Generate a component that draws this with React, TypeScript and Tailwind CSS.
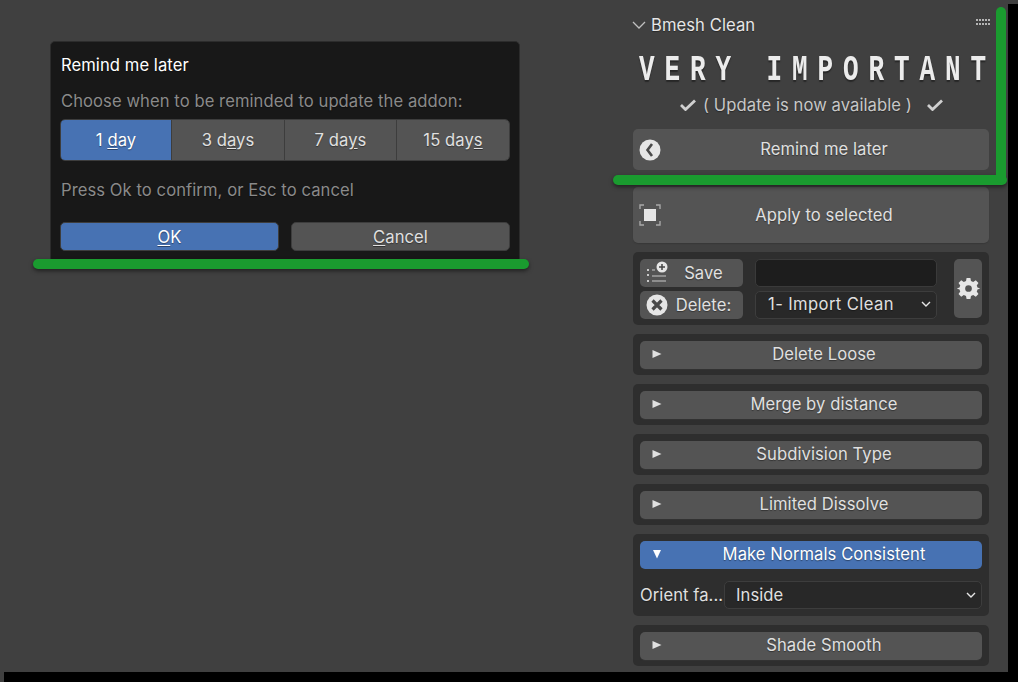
import React from "react";

const Tri = ({ down }: { down?: boolean }) => (
  <svg width="10" height="10" viewBox="0 0 10 10" className="absolute left-[12px] top-[8px]">
    {down ? <path d="M1 1H9L5 9.5Z" fill="#fff" /> : <path d="M0.5 1L9.5 5L0.5 9Z" fill="#e0e0e0" />}
  </svg>
);

const Check = () => (
  <svg width="16" height="12" viewBox="0 0 16 12">
    <path d="M1 6L5.5 10.5L15 1.5" fill="none" stroke="#d0d0d0" strokeWidth="2.8" />
  </svg>
);

const SelectChevron = () => (
  <svg width="10" height="7" viewBox="0 0 10 7">
    <path d="M1 1L5 5L9 1" fill="none" stroke="#e6e6e6" strokeWidth="1.4" />
  </svg>
);

const Collapsed = ({ label }: { label: string }) => (
  <div className="h-[41px] rounded-[5px] bg-[#2e2e2e] px-[7px] pt-[7px]">
    <div className="relative flex h-[28px] items-center justify-center rounded-[5px] bg-[#545454] pb-[2px] pl-[26px] text-[#e0e0e0] shadow-[0_1px_1px_#333]">
      <Tri />
      {label}
    </div>
  </div>
);

const Seg = ({ w, active, before, u, after, div }: { w: string; active?: boolean; before: string; u: string; after: string; div?: boolean }) => (
  <div className={`flex items-center justify-center ${w} ${active ? "bg-[#4772b3] text-white" : "bg-[#545454] text-[#e0e0e0]"} ${div ? "border-l border-[#3d3d3d]" : ""}`}>
    <span>
      {before}
      <span className="underline underline-offset-2">{u}</span>
      {after}
    </span>
  </div>
);

export default function App() {
  return (
    <div className="relative flex h-[682px] w-[1018px] overflow-hidden bg-black font-['Inter','Noto_Sans',sans-serif] text-[16.6px] tracking-[0.07px] [text-shadow:0_1px_1px_rgba(0,0,0,0.4)]">
      <div className="flex h-[672px] w-[1008px] bg-[#404040]">
        {/* left area */}
        <div className="w-[620px] pl-[50px] pt-[41px]">
          <div className="h-[222px] w-[470px] rounded-[5px] border border-[#2c2c2c] bg-[#181818] px-[10px] pt-[12px]">
            <div className="h-[22px] leading-[22px] text-white">Remind me later</div>
            <div className="mt-[14px] h-[22px] leading-[22px] text-[#8a8a8a]">Choose when to be reminded to update the addon:</div>
            <div className="-mx-px mt-[7px] flex h-[42px] overflow-hidden rounded-[5px] border border-[#3d3d3d]">
              <Seg w="w-[110px]" active before="1 " u="d" after="ay" />
              <Seg w="w-[113px]" div before="3 d" u="a" after="ys" />
              <Seg w="w-[112px]" div before="7 da" u="y" after="s" />
              <Seg w="flex-1" div before="15 day" u="s" after="" />
            </div>
            <div className="mt-[18px] h-[22px] leading-[22px] text-[#8a8a8a]">Press Ok to confirm, or Esc to cancel</div>
            <div className="-mx-px mt-[21px] flex gap-[12px]">
              <div className="flex h-[29px] w-[219px] items-center justify-center rounded-[5px] border border-[#3d3d3d] bg-[#4772b3] pt-[1px] text-white">
                <span><span className="underline underline-offset-2">O</span>K</span>
              </div>
              <div className="flex h-[29px] w-[219px] items-center justify-center rounded-[5px] border border-[#3d3d3d] bg-[#545454] pt-[1px] text-[#e0e0e0]">
                <span><span className="underline underline-offset-2">C</span>ancel</span>
              </div>
            </div>
          </div>
        </div>

        {/* right panel */}
        <div className="w-[388px] pr-[19px] pl-[13px]">
          <div className="flex h-[40px] items-center pt-[10px] text-[#e6e6e6]">
            <svg width="14" height="9" viewBox="0 0 14 9" className="-ml-px mr-[5px]">
              <path d="M1 1L7 7L13 1" fill="none" stroke="#c0c0c0" strokeWidth="1.3" />
            </svg>
            <span className="flex-1">Bmesh Clean</span>
            <svg width="15" height="7" viewBox="0 0 15 7" className="-mr-[2px] mb-[6px]">
              {[0, 3, 6, 9, 12].map((x) => (
                <g key={x} fill="#b5b5b5">
                  <rect x={x} y="0" width="2" height="2" />
                  <rect x={x} y="4" width="2" height="2" />
                </g>
              ))}
            </svg>
          </div>
          <div className="-mr-[20px] mt-[14px] h-[32px] scale-y-[1.45] whitespace-nowrap pl-[6px] font-['Liberation_Mono',monospace] text-[26px] font-bold leading-[32px] tracking-[9.9px] text-[#ececec]">
            VERY IMPORTANT
          </div>
          <div className="mt-[8px] flex h-[22px] items-center pl-[47px] text-[#c8c8c8]">
            <Check />
            <span className="ml-[7px] whitespace-nowrap">( Update is now available )</span>
            <span className="ml-[15px] flex"><Check /></span>
          </div>
          <div className="relative mt-[13px] flex h-[41px] items-center justify-center rounded-[5px] bg-[#545454] pl-[26px] text-[#e0e0e0]">
            <svg width="22" height="22" viewBox="0 0 22 22" className="absolute left-[6px] top-[10px]">
              <circle cx="11" cy="11" r="10.5" fill="#e6e6e6" />
              <path d="M13 5L8.5 11L13 17" fill="none" stroke="#4a4a4a" strokeWidth="2.6" />
            </svg>
            Remind me later
          </div>
          <div className="relative mt-[17px] flex h-[56px] items-center justify-center rounded-[5px] bg-[#545454] pl-[26px] text-[#e0e0e0] shadow-[0_1px_1px_#383838]">
            <svg width="22" height="22" viewBox="0 0 22 22" className="absolute left-[6px] top-[17px]">
              <rect x="5" y="5" width="12" height="12" fill="#e6e6e6" />
              <path d="M1 5V1H5M17 1H21V5M21 17V21H17M5 21H1V17" fill="none" stroke="#a8a8a8" strokeWidth="1.4" />
            </svg>
            Apply to selected
          </div>

          <div className="mt-[9px] flex h-[73px] rounded-[5px] bg-[#2e2e2e] px-[7px] pt-[7px]">
            <div className="flex w-[103px] shrink-0 flex-col gap-[4px]">
              <div className="relative flex h-[28px] items-center justify-center rounded-[5px] bg-[#545454] pl-[24px] text-[#e0e0e0]">
                <svg width="22" height="22" viewBox="0 0 22 22" className="absolute left-[6px] top-[2px]">
                  <circle cx="16" cy="6" r="5.5" fill="#e6e6e6" />
                  <path d="M16 3V9M13 6H19" stroke="#444" strokeWidth="1.5" />
                  <path d="M1 9H3M1 14H3M1 20H3" stroke="#c8c8c8" strokeWidth="2" />
                  <path d="M6 9H9M6 15H20M6 20H20" stroke="#c8c8c8" strokeWidth="1.2" />
                </svg>
                Save
              </div>
              <div className="relative flex h-[28px] items-center justify-center rounded-[5px] bg-[#545454] pl-[24px] text-[#e0e0e0]">
                <svg width="22" height="22" viewBox="0 0 22 22" className="absolute left-[6px] top-[3px]">
                  <circle cx="11" cy="11" r="10.5" fill="#e6e6e6" />
                  <path d="M6.5 6.5L15.5 15.5M15.5 6.5L6.5 15.5" stroke="#4a4a4a" strokeWidth="3.2" />
                </svg>
                Delete:
              </div>
            </div>
            <div className="ml-[12px] flex w-[182px] shrink-0 flex-col gap-[4px]">
              <div className="h-[28px] rounded-[5px] border border-[#3a3a3a] bg-[#1d1d1d]" />
              <div className="flex h-[28px] items-center justify-between rounded-[5px] border border-[#3d3d3d] bg-[#282828] pb-[2px] pl-[12px] pr-[5px] whitespace-nowrap text-[#e0e0e0]">
                <span className="tracking-[0.4px]">1- Import Clean</span>
                <SelectChevron />
              </div>
            </div>
            <div className="ml-[17px] flex h-[59px] w-[28px] shrink-0 items-center justify-center rounded-[5px] bg-[#545454]">
              <svg width="23" height="23" viewBox="0 0 24 24">
                <path
                  fill="#e6e6e6"
                  fillRule="evenodd"
                  d="M10 1H14L14.6 4.2L16.9 5.2L19.6 3.4L22.4 6.2L20.6 8.9L21.6 11.2L23.5 11.6V12.4L21.6 12.8L20.6 15.1L22.4 17.8L19.6 20.6L16.9 18.8L14.6 19.8L14 23H10L9.4 19.8L7.1 18.8L4.4 20.6L1.6 17.8L3.4 15.1L2.4 12.8L0.5 12.4V11.6L2.4 11.2L3.4 8.9L1.6 6.2L4.4 3.4L7.1 5.2L9.4 4.2ZM12 8.5A3.5 3.5 0 1 0 12 15.5A3.5 3.5 0 1 0 12 8.5Z"
                />
              </svg>
            </div>
          </div>

          <div className="mt-[9px] flex flex-col gap-[9px]">
            <Collapsed label="Delete Loose" />
            <Collapsed label="Merge by distance" />
            <Collapsed label="Subdivision Type" />
            <Collapsed label="Limited Dissolve" />
            <div className="h-[82px] rounded-[5px] bg-[#2e2e2e] px-[7px] pt-[7px]">
              <div className="relative flex h-[28px] items-center justify-center rounded-[5px] bg-[#4772b3] pb-[2px] pl-[26px] text-white">
                <Tri down />
                Make Normals Consistent
              </div>
              <div className="mt-[12px] flex items-center">
                <span className="w-[84px] shrink-0 whitespace-nowrap text-[#e0e0e0]">Orient fa...</span>
                <div className="flex h-[28px] flex-1 items-center justify-between rounded-[5px] border border-[#3d3d3d] bg-[#282828] pl-[11px] pr-[5px] text-[#e0e0e0]">
                  Inside
                  <SelectChevron />
                </div>
              </div>
            </div>
            <Collapsed label="Shade Smooth" />
          </div>
        </div>
      </div>

      {/* window shadow edges */}
      <div className="absolute left-0 top-[672px] h-[10px] w-[4px] bg-[#404040]" />
      <div className="absolute left-[1008px] top-0 h-[4px] w-[10px] bg-[#404040]" />

      {/* green annotation strokes */}
      <div className="absolute left-[33px] top-[259px] h-[10px] w-[496px] rounded-full bg-[#1a9b2f] shadow-[0_2px_4px_rgba(0,0,0,0.5)]" />
      <div className="absolute left-[613px] top-[175px] h-[10px] w-[394px] rounded-full bg-[#1a9b2f] shadow-[0_2px_4px_rgba(0,0,0,0.5)]" />
      <div className="absolute left-[996px] top-[7px] h-[176px] w-[10px] rounded-full bg-[#1a9b2f]" />
    </div>
  );
}
